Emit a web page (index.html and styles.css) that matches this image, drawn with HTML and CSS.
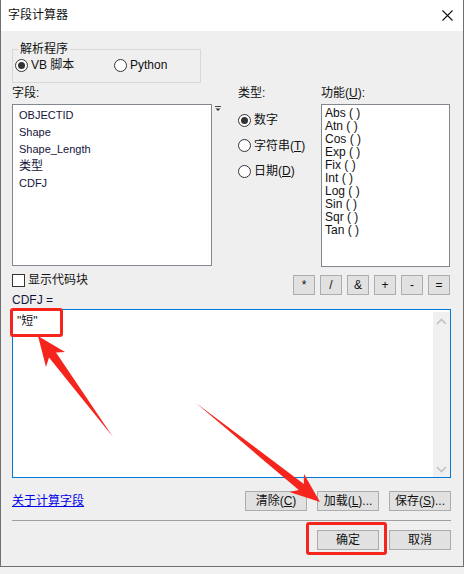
FILE: index.html
```html
<!DOCTYPE html>
<html lang="zh-CN">
<head>
<meta charset="utf-8">
<title>字段计算器</title>
<link rel="stylesheet" href="styles.css">
</head>
<body>
<div class="window">
  <div class="titlebar">
    <span class="title">字段计算器</span>
    <svg class="close" width="11" height="11" viewBox="0 0 11 11"><path d="M0.5 0.5 L10.5 10.5 M10.5 0.5 L0.5 10.5" stroke="#111" stroke-width="1.1" fill="none"/></svg>
  </div>
  <div class="content">
    <fieldset class="parser">
      <legend>解析程序</legend>
      <div class="parser-row">
        <label class="opt vb"><span class="rb checked"></span><span>VB 脚本</span></label>
        <label class="opt"><span class="rb"></span><span>Python</span></label>
      </div>
    </fieldset>

    <div class="main">
      <div class="lbl c1">字段:</div>
      <div class="lbl c3">类型:</div>
      <div class="lbl c4">功能(<u>U</u>):</div>

      <div class="listbox fieldlist">
        <div class="fi">OBJECTID</div>
        <div class="fi">Shape</div>
        <div class="fi">Shape_Length</div>
        <div class="fi cjk">类型</div>
        <div class="fi">CDFJ</div>
      </div>
      <div class="dropmark"><svg width="6" height="6" viewBox="0 0 6 6"><path d="M0 0.5 H6" stroke="#444" stroke-width="1"/><path d="M0.5 2.5 H5.5 L3 5 Z" fill="#333"/></svg></div>
      <div class="types">
        <label class="opt trow"><span class="rb checked"></span><span>数字</span></label>
        <label class="opt trow"><span class="rb"></span><span>字符串(<u>T</u>)</span></label>
        <label class="opt trow"><span class="rb"></span><span>日期(<u>D</u>)</span></label>
      </div>
      <div class="listbox funclist">
        <div class="fn">Abs ( )</div>
        <div class="fn">Atn ( )</div>
        <div class="fn">Cos ( )</div>
        <div class="fn">Exp ( )</div>
        <div class="fn">Fix ( )</div>
        <div class="fn">Int ( )</div>
        <div class="fn">Log ( )</div>
        <div class="fn">Sin ( )</div>
        <div class="fn">Sqr ( )</div>
        <div class="fn">Tan ( )</div>
      </div>

      <div class="below-left">
        <label class="check"><span class="box"></span><span>显示代码块</span></label>
        <div class="exprlbl">CDFJ =</div>
      </div>
      <div class="ops">
        <button class="op">*</button>
        <button class="op">/</button>
        <button class="op">&amp;</button>
        <button class="op">+</button>
        <button class="op">-</button>
        <button class="op">=</button>
      </div>
    </div>

    <div class="expr">
      <div class="expr-text">"短"</div>
      <div class="scroll">
        <svg width="11" height="7" viewBox="0 0 11 7"><path d="M1 6 L5.5 1.5 L10 6" stroke="#c2c2c2" stroke-width="1.6" fill="none"/></svg>
        <svg width="11" height="7" viewBox="0 0 11 7"><path d="M1 1 L5.5 5.5 L10 1" stroke="#c2c2c2" stroke-width="1.6" fill="none"/></svg>
      </div>
    </div>

    <div class="actions">
      <a class="link" href="#">关于计算字段</a>
      <div class="btns">
        <button class="btn">清除(<u>C</u>)</button>
        <button class="btn">加载(<u>L</u>)...</button>
        <button class="btn">保存(<u>S</u>)...</button>
      </div>
    </div>

    <div class="sep"></div>

    <div class="final">
      <button class="btn">确定</button>
      <button class="btn">取消</button>
    </div>
  </div>

  <div class="mark mark-text"></div>
  <div class="mark mark-ok"></div>
  <svg class="arrows" width="464" height="574" viewBox="0 0 464 574">
    <polygon points="38,336 65,352 56,352.5 113,437 49,357.5 46,367" fill="#f5241c"/>
    <polygon points="320,502 289.5,492 298.8,490.1 196,403 303.8,483.9 304,474" fill="#f5241c"/>
  </svg>
</div>
</body>
</html>
```

FILE: styles.css
```css
* { box-sizing: border-box; }

body {
  margin: 0;
  background: #f0f0f0;
  font-family: "Liberation Sans", "Noto Sans CJK SC", sans-serif;
  font-size: 12px;
  color: #111;
}

.window {
  position: relative;
  width: 464px;
  height: 567px;
  background: #efefef;
  border-left: 1px solid #707070;
  border-right: 1px solid #707070;
  border-bottom: 1px solid #707070;
}

.titlebar {
  height: 31px;
  background: #fff;
  display: flex;
  align-items: center;
  justify-content: space-between;
  padding: 0 10px 1px 7px;
}
.title { font-size: 12px; line-height: 14px; }
.close { display: block; }

.content {
  padding: 0 12px 0 11px;
}

/* parser group */
.parser {
  margin: 11px 0 0 0;
  width: 189px;
  padding: 0 2px 9px 2px;
  border: 1px solid #d8d8d8;
}
.parser legend {
  margin-left: 3px;
  padding: 0 2px;
  font-size: 12px;
  line-height: 14px;
}
.parser-row {
  display: flex;
  align-items: center;
  height: 17px;
  padding-top: 1px;
}
.opt {
  display: flex;
  align-items: center;
  gap: 3px;
  line-height: 14px;
  white-space: nowrap;
}
.vb { width: 99px; }

.rb {
  position: relative;
  display: inline-block;
  width: 13px;
  height: 13px;
  border: 1px solid #333;
  border-radius: 50%;
  background: #fff;
  flex: none;
}
.rb.checked::after {
  content: "";
  position: absolute;
  left: 2px;
  top: 2px;
  width: 7px;
  height: 7px;
  border-radius: 50%;
  background: #333;
}

/* main grid */
.main {
  display: grid;
  grid-template-columns: 200px 26px 83px 129px;
  grid-template-rows: 16px auto auto;
  row-gap: 0;
  margin-top: 2px;
}
.lbl { line-height: 16px; font-size: 12px; }
.c1 { grid-column: 1; grid-row: 1; }
.c3 { grid-column: 3; grid-row: 1; }
.c4 { grid-column: 4; grid-row: 1; }

.listbox {
  background: #fff;
  border: 1px solid #828790;
  margin-top: 3px;
}
.fieldlist {
  grid-column: 1;
  grid-row: 2;
  height: 162px;
  padding: 2px 0 0 6px;
}
.fi {
  font-size: 11px;
  line-height: 17px;
  color: #15153a;
}
.fi.cjk { font-size: 12px; }

.dropmark {
  grid-column: 2;
  grid-row: 2;
  padding: 5px 0 0 3px;
}
.dropmark svg { display: block; }

.types {
  grid-column: 3;
  grid-row: 2;
  display: flex;
  flex-direction: column;
  gap: 5.5px;
  padding-top: 9px;
}
.trow { height: 20px; }

.funclist {
  grid-column: 4;
  grid-row: 2;
  height: 163px;
  padding: 2px 0 0 3px;
}
.fn {
  font-size: 12px;
  line-height: 13px;
  color: #111;
}

.below-left {
  grid-column: 1 / 3;
  grid-row: 3;
  padding-top: 6px;
}
.check {
  display: flex;
  align-items: center;
  gap: 3px;
  height: 14px;
  line-height: 14px;
}
.box {
  width: 13px;
  height: 13px;
  border: 1px solid #333;
  background: #fff;
  flex: none;
}
.exprlbl {
  margin-top: 5px;
  line-height: 16px;
  color: #15153a;
}

.ops {
  grid-column: 3 / 5;
  grid-row: 3;
  justify-self: end;
  align-self: start;
  display: flex;
  gap: 5px;
  margin-top: 8px;
}
.op {
  width: 22px;
  height: 20px;
  padding: 0;
  background: #e1e1e1;
  border: 1px solid #adadad;
  font-family: "Liberation Sans", sans-serif;
  font-size: 12px;
  color: #111;
}

/* expression */
.expr {
  margin-top: 1px;
  height: 169px;
  border: 1px solid #0078d7;
  background: #fff;
  display: flex;
}
.expr-text {
  flex: 1;
  padding: 3px 4px;
  line-height: 16px;
  font-size: 12px;
}
.scroll {
  width: 17px;
  background: #f0f0f0;
  margin: 2px 0 0 0;
  display: flex;
  flex-direction: column;
  justify-content: space-between;
  align-items: center;
  padding: 6px 0 4px;
}
.scroll svg { display: block; }

/* actions */
.actions {
  margin-top: 13px;
  height: 20px;
  display: flex;
  align-items: center;
  justify-content: space-between;
}
.link {
  color: #0000ee;
  text-decoration: underline;
  font-size: 12px;
  line-height: 14px;
}
.btns, .final {
  display: flex;
  gap: 10px;
}
.btn {
  width: 62px;
  height: 20px;
  padding: 0;
  background: #e1e1e1;
  border: 1px solid #adadad;
  font-family: "Liberation Sans", "Noto Sans CJK SC", sans-serif;
  font-size: 12px;
  line-height: 14px;
  color: #111;
}

.sep {
  margin-top: 9px;
  border-top: 1px solid #a0a0a0;
}

.final {
  margin-top: 9px;
  justify-content: flex-end;
}

/* overlays */
.mark {
  position: absolute;
  border: 3px solid #f5241c;
  border-radius: 3px;
}
.mark-text { left: 9px; top: 308px; width: 53px; height: 29px; }
.mark-ok { left: 305px; top: 522px; width: 81px; height: 33px; }

.arrows {
  position: absolute;
  left: -1px;
  top: 0;
  pointer-events: none;
}
```
